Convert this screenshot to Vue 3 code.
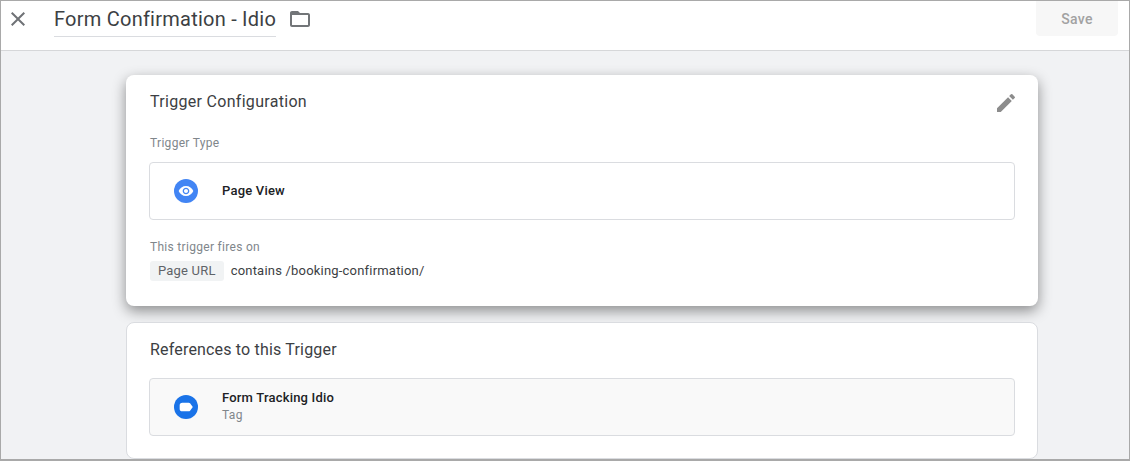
<template>
  <div class="frame">
    <header class="topbar">
      <button class="close" aria-label="Close">
        <svg viewBox="0 0 24 24" width="24" height="24"><path d="M19 6.41 17.59 5 12 10.59 6.41 5 5 6.41 10.59 12 5 17.59 6.41 19 12 13.41 17.59 19 19 17.59 13.41 12z" /></svg>
      </button>
      <div class="title">Form Confirmation - Idio</div>
      <svg class="folder" viewBox="0 0 24 24" width="24" height="24"><path d="M20 6h-8l-2-2H4c-1.1 0-1.99.9-1.99 2L2 18c0 1.1.9 2 2 2h16c1.1 0 2-.9 2-2V8c0-1.1-.9-2-2-2zm0 12H4V8h16v10z" /></svg>
      <button class="save">Save</button>
    </header>
    <main class="content">
      <section class="card raised">
        <div class="card-head">
          <h2 class="config-title">Trigger Configuration</h2>
          <svg class="edit" viewBox="0 0 24 24" width="24" height="24"><path d="M3 17.25V21h3.75L17.81 9.94l-3.75-3.75L3 17.25zM20.71 7.04a1 1 0 0 0 0-1.41l-2.34-2.34a1 1 0 0 0-1.41 0l-1.83 1.83 3.75 3.75 1.83-1.83z" /></svg>
        </div>
        <div class="label type-label">Trigger Type</div>
        <div class="row">
          <span class="badge page-view">
            <svg viewBox="0 0 24 24" width="16" height="16"><path d="M12 4.5C7 4.5 2.73 7.61 1 12c1.73 4.39 6 7.5 11 7.5s9.27-3.11 11-7.5c-1.73-4.39-6-7.5-11-7.5zM12 17c-2.76 0-5-2.24-5-5s2.24-5 5-5 5 2.24 5 5-2.24 5-5 5zm0-8c-1.66 0-3 1.34-3 3s1.34 3 3 3 3-1.34 3-3-1.34-3-3-3z" /></svg>
          </span>
          <div class="row-name">Page View</div>
        </div>
        <div class="label fires-label">This trigger fires on</div>
        <div class="filter">
          <span class="chip">Page URL</span>
          <span class="cond">contains /booking-confirmation/</span>
        </div>
      </section>
      <section class="card refs">
        <h2>References to this Trigger</h2>
        <div class="row ref-row">
          <span class="badge tag">
            <svg viewBox="0 0 24 24" width="16" height="16"><path d="M2.5 9.5a4 4 0 0 1 4-4h9.6c.8 0 1.5.3 2 .9L22.2 12l-4.1 5.6c-.5.6-1.2.9-2 .9H6.5a4 4 0 0 1-4-4z" /></svg>
          </span>
          <div>
            <div class="row-name">Form Tracking Idio</div>
            <div class="row-sub">Tag</div>
          </div>
        </div>
      </section>
    </main>
  </div>
</template>

<script setup>
</script>

<style>
html, body {
  margin: 0;
  background: #fff;
}
</style>

<style scoped>
.frame {
  width: 1130px;
  height: 461px;
  box-sizing: border-box;
  border: 1px solid #a9a9a9;
  border-bottom-width: 2px;
  display: flex;
  flex-direction: column;
  overflow: hidden;
  font-family: Roboto, "Liberation Sans", sans-serif;
  color: #202124;
}

.topbar {
  height: 49px;
  flex-shrink: 0;
  display: flex;
  align-items: flex-start;
  background: #fff;
  border-bottom: 1px solid #d6d7d9;
}

.close {
  width: 24px;
  height: 24px;
  margin: 6px 0 0 5px;
  padding: 0;
  border: 0;
  background: none;
  fill: #6f7276;
}

.title {
  margin: 2px 0 0 24px;
  height: 34px;
  line-height: 33px;
  box-sizing: border-box;
  font-size: 20px;
  letter-spacing: 0.24px;
  color: #3c4043;
  border-bottom: 1px solid #dadce0;
}

.folder {
  margin: 6px 0 0 12px;
  fill: #727578;
}

.save {
  margin-left: auto;
  margin-right: 11px;
  width: 82px;
  height: 35px;
  margin-top: 0;
  border: 0;
  border-radius: 0 0 4px 4px;
  background: #f7f7f7;
  color: #a2a2a2;
  font: 500 14px Roboto, sans-serif;
  letter-spacing: 0.3px;
}

.content {
  flex: 1;
  background: #f1f2f4;
  padding: 24px 91px 0 125px;
  min-height: 0;
}

.card {
  background: #fff;
  border-radius: 8px;
  box-sizing: border-box;
}

.raised {
  height: 231px;
  padding: 0 23px 0 24px;
  box-shadow: 0 5px 14px rgba(0, 0, 0, 0.42);
}

.card-head {
  display: flex;
  justify-content: space-between;
  padding-top: 16px;
}

.edit {
  fill: #8c8c8c;
  margin: 0 -3px 0 0;
}

h2 {
  margin: 0;
  font-size: 16px;
  font-weight: 400;
  line-height: 21px;
  letter-spacing: 0.18px;
  color: #3c4043;
}

.config-title {
  letter-spacing: 0.3px;
}

.label {
  font-size: 12px;
  line-height: 16px;
  letter-spacing: 0.3px;
  color: #80868b;
}

.type-label {
  margin-top: 20px;
}

.row {
  height: 58px;
  box-sizing: border-box;
  display: flex;
  align-items: center;
  margin: 11px 0 0 -1px;
  padding-left: 24px;
  border: 1px solid #dadce0;
  border-radius: 4px;
}

.badge {
  width: 24px;
  height: 24px;
  border-radius: 50%;
  flex-shrink: 0;
  display: flex;
  align-items: center;
  justify-content: center;
  fill: #fff;
  margin-right: 24px;
}

.page-view {
  background: #4285f4;
}

.tag {
  background: #1a73e8;
}

.row-name {
  font-size: 13px;
  font-weight: 500;
  line-height: 16px;
  letter-spacing: 0.2px;
  color: #202124;
}

.row-sub {
  font-size: 12px;
  line-height: 16px;
  letter-spacing: 0.3px;
  color: #80868b;
}

.fires-label {
  margin-top: 19px;
}

.filter {
  display: flex;
  align-items: center;
  margin-top: 6px;
  font-size: 13px;
  letter-spacing: 0.2px;
}

.chip {
  height: 20px;
  line-height: 20px;
  padding: 0 8px;
  border-radius: 3px;
  background: #f1f3f4;
  color: #5f6368;
}

.cond {
  margin-left: 7px;
  line-height: 20px;
  color: #3c4043;
}

.refs {
  margin-top: 16px;
  height: 137px;
  padding: 16px 22px 0 23px;
  border: 1px solid #dadce0;
}

.ref-row {
  background: #f9f9f9;
  margin-top: 18px;
}

.ref-row .row-name {
  margin: -1px 0 1px;
}
</style>
